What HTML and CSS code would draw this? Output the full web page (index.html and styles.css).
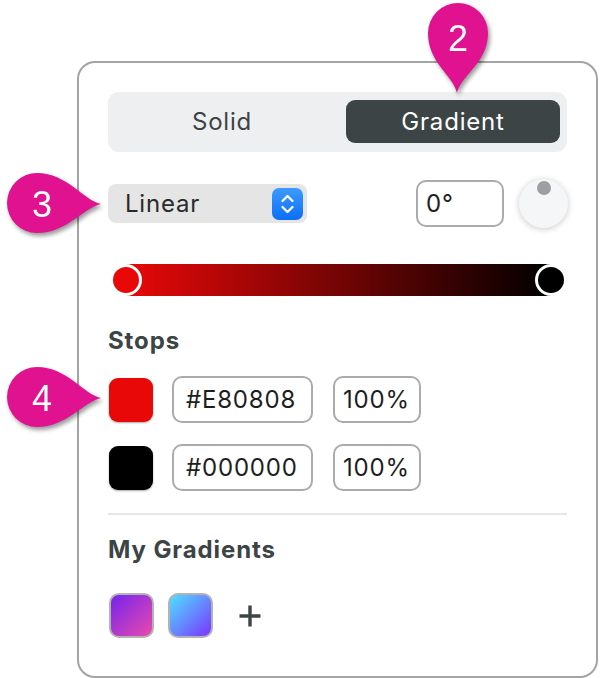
FILE: index.html
```html
<!DOCTYPE html>
<html>
<head>
<meta charset="utf-8">
<link rel="stylesheet" href="styles.css">
</head>
<body>
<div class="panel">
  <div class="segmented">
    <div class="seg">Solid</div>
    <div class="seg seg-active">Gradient</div>
  </div>

  <div class="type-row">
    <div class="select">
      <span class="select-label">Linear</span>
      <svg class="stepper" width="31" height="32" viewBox="0 0 31 32">
        <defs>
          <linearGradient id="sg" x1="0" y1="0" x2="0" y2="1">
            <stop offset="0" stop-color="#3d9bff"/>
            <stop offset="1" stop-color="#0b6ef5"/>
          </linearGradient>
        </defs>
        <rect x="0" y="0" width="31" height="32" rx="7" fill="url(#sg)"/>
        <path d="M10.5 13 L15.5 8 L20.5 13" fill="none" stroke="#fff" stroke-width="2.3" stroke-linecap="round" stroke-linejoin="round"/>
        <path d="M10.5 19 L15.5 24 L20.5 19" fill="none" stroke="#fff" stroke-width="2.3" stroke-linecap="round" stroke-linejoin="round"/>
      </svg>
    </div>
    <div class="angle-group">
      <div class="field field-angle">0°</div>
      <div class="knob"><div class="knob-dot"></div></div>
    </div>
  </div>

  <div class="slider">
    <div class="slider-track"></div>
    <div class="thumb thumb-red"></div>
    <div class="thumb thumb-black"></div>
  </div>

  <div class="label label-stops">Stops</div>

  <div class="stops">
    <div class="stop-row">
      <div class="swatch swatch-red"></div>
      <div class="field field-hex">#E80808</div>
      <div class="field field-pct">100%</div>
    </div>
    <div class="stop-row">
      <div class="swatch swatch-black"></div>
      <div class="field field-hex">#000000</div>
      <div class="field field-pct">100%</div>
    </div>
  </div>

  <div class="divider"></div>

  <div class="label label-mine">My Gradients</div>

  <div class="presets">
    <div class="preset preset-purple"></div>
    <div class="preset preset-blue"></div>
    <svg class="plus" width="24" height="24" viewBox="0 0 24 24">
      <path d="M12 1.5 V22.5 M1.5 12 H22.5" stroke="#3c4446" stroke-width="3.4" stroke-linecap="butt"/>
    </svg>
  </div>
</div>

<svg class="callout callout-2" width="80" height="100" viewBox="0 0 80 100">
  <path d="M37 93 C33 75 8 63 8 33 A30 30 0 0 1 68 33 C68 63 41 75 37 93 Z" class="callout-shape"/>
  <text x="38" y="51" class="callout-num">2</text>
</svg>
<svg class="callout callout-3" width="110" height="80" viewBox="0 0 110 80">
  <path d="M101 39 C83 35 67 8 37 8 A30 30 0 0 0 37 68 C67 68 83 43 101 39 Z" class="callout-shape"/>
  <text x="42" y="52" class="callout-num">3</text>
</svg>
<svg class="callout callout-4" width="110" height="80" viewBox="0 0 110 80">
  <path d="M101 39 C83 35 67 8 37 8 A30 30 0 0 0 37 68 C67 68 83 43 101 39 Z" class="callout-shape"/>
  <text x="42" y="52" class="callout-num">4</text>
</svg>
</body>
</html>
```

FILE: styles.css
```css
* { box-sizing: border-box; }

html, body {
  margin: 0;
  background: #ffffff;
}

body {
  width: 602px;
  height: 678px;
  overflow: hidden;
  padding: 61px 0 0 77px;
  font-family: Inter, "Noto Sans", sans-serif;
  color: #1e1e1e;
  position: relative;
}

.panel {
  width: 521px;
  height: 617px;
  border: 2px solid #a4a4a4;
  border-radius: 18px;
  padding: 29px 29px 0 29px;
  display: flex;
  flex-direction: column;
  background: #fff;
}

/* segmented control */
.segmented {
  height: 60px;
  background: #eeeff1;
  border-radius: 11px;
  padding: 8px 7px 9px 7px;
  display: grid;
  grid-template-columns: 1fr 1fr;
  gap: 17px;
}

.seg {
  display: flex;
  align-items: center;
  justify-content: center;
  font-size: 24px;
  letter-spacing: 0.8px;
  color: #3c4446;
  border-radius: 9px;
}

.seg-active {
  background: #3c4446;
  color: #ffffff;
}

/* type row */
.type-row {
  margin-top: 27px;
  height: 49px;
  display: flex;
  align-items: center;
  justify-content: space-between;
}

.select {
  width: 199px;
  height: 39px;
  background: #e5e5e5;
  border-radius: 8px;
  display: flex;
  align-items: center;
  justify-content: space-between;
  padding: 0 4px 0 17px;
}

.select-label {
  font-size: 24px;
  letter-spacing: 0.8px;
  color: #2a2a2a;
}

.stepper { display: block; }

.angle-group {
  display: flex;
  align-items: center;
  gap: 15px;
  margin-right: -1px;
}

.field {
  height: 47px;
  border: 2px solid #a9abae;
  border-radius: 10px;
  display: flex;
  align-items: center;
  font-size: 24px;
  letter-spacing: 0.8px;
  color: #1e1e1e;
}

.field-angle {
  width: 88px;
  padding-left: 8px;
}

.knob {
  width: 49px;
  height: 49px;
  border-radius: 50%;
  background: #f5f6f8;
  box-shadow: 0 1px 6px rgba(0, 0, 0, 0.22);
  display: flex;
  justify-content: center;
  padding-top: 2px;
}

.knob-dot {
  width: 14px;
  height: 14px;
  border-radius: 50%;
  background: #9d9fa2;
}

/* slider */
.slider {
  margin-top: 36px;
  height: 32px;
  position: relative;
  margin-left: 2px;
  margin-right: 0;
}

.slider-track {
  position: absolute;
  left: 16px;
  right: 16px;
  top: 0;
  bottom: 0;
  background: linear-gradient(to right, #e80808, #000000);
}

.thumb {
  position: absolute;
  top: 0;
  width: 32px;
  height: 32px;
  border-radius: 50%;
  border: 3px solid #ffffff;
}

.thumb-red { left: 0; background: #e80808; }
.thumb-black { right: 0; background: #000000; }

/* labels */
.label {
  font-size: 24px;
  font-weight: 700;
  letter-spacing: 0.9px;
  color: #3c4446;
  line-height: 26px;
}

.label-stops { margin-top: 32px; }

.stops {
  margin-top: 22px;
  display: flex;
  flex-direction: column;
  gap: 21px;
}

.stop-row {
  display: flex;
  align-items: center;
  gap: 20px;
}

.swatch {
  width: 44px;
  height: 44px;
  border-radius: 9px;
  box-shadow: 0 1px 2px rgba(0, 0, 0, 0.35);
  margin-left: 1px;
  margin-right: -1px;
}

.swatch-red { background: #e80808; }
.swatch-black { background: #000000; }

.field-hex {
  width: 141px;
  padding-left: 12px;
}

.field-pct {
  width: 88px;
  padding-left: 8px;
}

.divider {
  margin-top: 22px;
  height: 2px;
  background: #e6e6e6;
}

.label-mine { margin-top: 22px; }

.presets {
  margin-top: 30px;
  display: flex;
  align-items: center;
  gap: 14px;
  padding-left: 1px;
}

.preset {
  width: 45px;
  height: 45px;
  border-radius: 10px;
  border: 2.5px solid #b3b3b3;
}

.preset-purple { background: linear-gradient(135deg, #7424ee, #ea4aac); }
.preset-blue { background: linear-gradient(135deg, #4fe0ff, #7a35ff); }

.plus { margin-left: 11px; display: block; }

/* callouts */
.callout {
  position: absolute;
  overflow: visible;
  filter: drop-shadow(2px 3px 2px rgba(0, 0, 0, 0.4));
}

.callout-2 { left: 420px; top: 0; }
.callout-3 { left: 0; top: 165px; }
.callout-4 { left: 0; top: 359px; }

.callout-shape { fill: #e1128f; }

.callout-num {
  fill: #ffffff;
  font-family: "Liberation Sans", Arial, sans-serif;
  font-size: 36px;
  text-anchor: middle;
}
```
